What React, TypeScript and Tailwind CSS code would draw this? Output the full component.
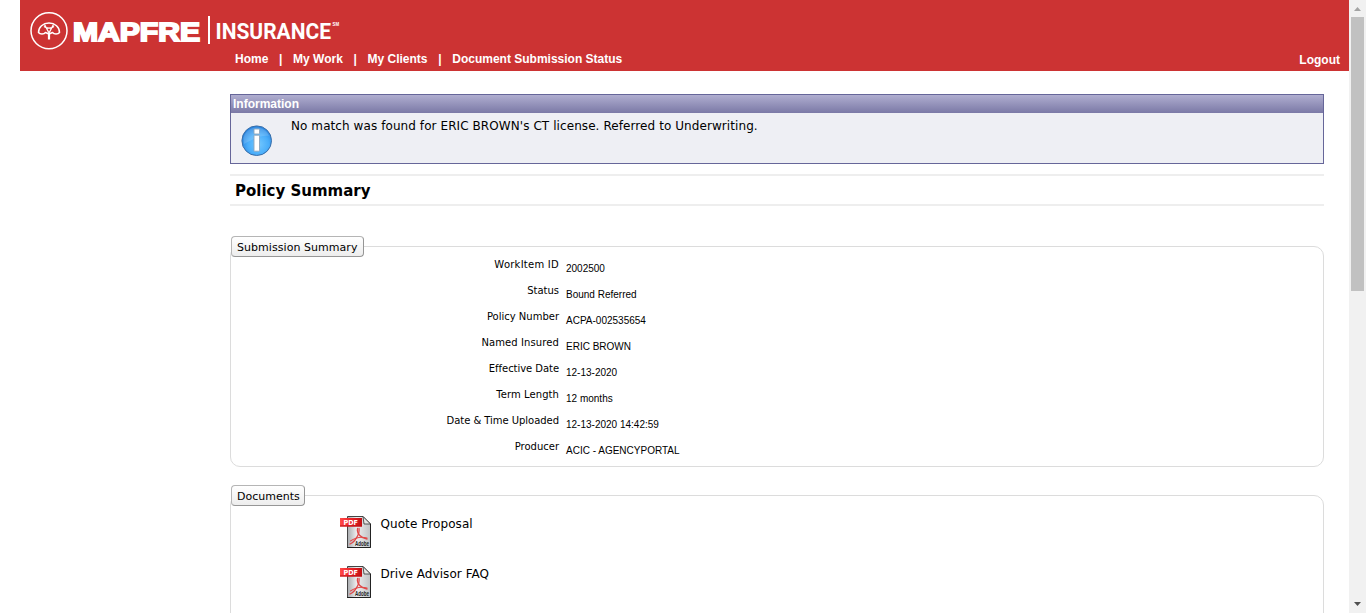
import React from "react";

const navItems = ["Home", "My Work", "My Clients", "Document Submission Status"];

const summary: { label: string; value: string; tracking: string }[] = [
  { label: "WorkItem ID", value: "2002500", tracking: "tracking-[0.25px]" },
  { label: "Status", value: "Bound Referred", tracking: "" },
  { label: "Policy Number", value: "ACPA-002535654", tracking: "" },
  { label: "Named Insured", value: "ERIC BROWN", tracking: "tracking-[0.1px]" },
  { label: "Effective Date", value: "12-13-2020", tracking: "tracking-[-0.05px]" },
  { label: "Term Length", value: "12 months", tracking: "tracking-[0.08px]" },
  { label: "Date & Time Uploaded", value: "12-13-2020 14:42:59", tracking: "tracking-[-0.04px]" },
  { label: "Producer", value: "ACIC - AGENCYPORTAL", tracking: "" },
];

const documents = ["Quote Proposal", "Drive Advisor FAQ"];

function Logo() {
  return (
    <svg className="block h-[50px] w-[330px]" viewBox="20 0 330 50" fill="none">
      <circle cx="49" cy="30.700" r="18" stroke="#fff" strokeWidth="1.500" />
      <g stroke="#fff" strokeWidth="1.500" strokeLinejoin="round">
        <path d="M38.500 32.500C38.500 27 43 23 49 23s10.500 4 10.500 9.500c-1.500 2-5.500 2-7 0L49 34l-3.500-1.500c-1.500 2-5.500 2-7 0Z" />
        <path d="M44.500 24.500L49 33l4.500-8.500M44 26.500c2.500 2.200 7.500 2.200 10 0" strokeWidth="1.300" />
      </g>
      <path d="M49 33v6.500" stroke="#fff" strokeWidth="2.200" />
      <text x="73" y="40.500" fill="#fff" stroke="#fff" strokeWidth="1.900" fontFamily="Liberation Sans, sans-serif" fontWeight="700" fontSize="26" textLength="127" lengthAdjust="spacingAndGlyphs">MAPFRE</text>
      <path d="M209 16v28" stroke="#fff" strokeWidth="2" />
      <text x="215.500" y="38.500" fill="#fff" fontFamily="Roboto, sans-serif" fontWeight="700" fontSize="22" textLength="115.500" lengthAdjust="spacingAndGlyphs">
        INSURANCE
      </text>
      <text x="332.500" y="25.500" fill="#fff" fontFamily="Liberation Sans, sans-serif" fontWeight="700" fontSize="4.500" textLength="6.500" lengthAdjust="spacingAndGlyphs">SM</text>
    </svg>
  );
}

function InfoIcon() {
  return (
    <svg className="mt-[12px] ml-[10px] block size-8 shrink-0" viewBox="0 0 32 32">
      <defs>
        <radialGradient id="infoFill" cx=".55" cy=".62" r=".58">
          <stop offset="0" stopColor="#74c8ff" />
          <stop offset=".6" stopColor="#4aaefa" />
          <stop offset="1" stopColor="#2a86e0" />
        </radialGradient>
      </defs>
      <circle cx="15.700" cy="15.700" r="14.800" fill="url(#infoFill)" stroke="#3a6ea8" strokeWidth="1" />
      <path d="M2.500 13C4.500 6 10 2.500 15.700 2.500S26 6 28 11c-8-1-16 3-25 8Z" fill="#fff" opacity=".15" />
      <g fill="#fff" stroke="#8fa5ba" strokeWidth=".9">
        <rect x="13" y="4" width="5.500" height="5" rx=".8" />
        <rect x="13" y="10.200" width="5.500" height="16" rx=".6" />
      </g>
    </svg>
  );
}

function PdfIcon() {
  return (
    <svg className="block h-[34px] w-8 shrink-0" viewBox="0 0 32 34">
      <defs>
        <linearGradient id="paper" x1="0" y1="0" x2="1" y2="0">
          <stop offset="0" stopColor="#a9acaf" />
          <stop offset=".4" stopColor="#eeeeef" />
          <stop offset="1" stopColor="#bfc1c4" />
        </linearGradient>
        <linearGradient id="pdfTag" x1="0" y1="0" x2="1" y2="0">
          <stop offset="0" stopColor="#ff4a48" />
          <stop offset=".5" stopColor="#ee2226" />
          <stop offset="1" stopColor="#c00f14" />
        </linearGradient>
      </defs>
      <path d="M7.500 1.500h15.500l7.500 7.500v23.500h-23Z" fill="url(#paper)" stroke="#444" />
      <path d="M23 1.500l7.500 7.500H24Z" fill="#e4e4e4" stroke="#333" strokeWidth=".8" />
      <path d="M7 32.500h23.500V9" fill="none" stroke="#222" />
      <g fill="none" stroke="#e04848" strokeWidth="1.300" strokeLinecap="round">
        <path d="M17.500 13.500c-.8 5 3 9.500 9.500 10.500" />
        <path d="M19 13.500c1 5-4 13.500-9 15.500" />
        <path d="M10.500 26c5-3.500 11-4.500 16.500-3" strokeWidth="1.100" />
      </g>
      <rect x="0" y="3" width="22" height="8.500" fill="url(#pdfTag)" />
      <path d="M0 11h22" stroke="#b80f14" />
      <text x="3.500" y="10" fill="#fff" fontFamily="DejaVu Sans, sans-serif" fontWeight="700" fontSize="7" textLength="14.500" lengthAdjust="spacingAndGlyphs">PDF</text>
      <text x="15" y="30.500" fill="#222" fontFamily="Liberation Sans, sans-serif" fontWeight="700" fontSize="7.500" textLength="14" lengthAdjust="spacingAndGlyphs">Adobe</text>
    </svg>
  );
}

function Section({ title, titleClass, className, children }: { title: string; titleClass: string; className: string; children: React.ReactNode }) {
  return (
    <section className={"relative rounded-[10px] border border-[#dcdcdc] " + className}>
      <h2 className={"absolute -top-[11px] left-0 h-[21px] rounded-[4px] border border-[#b5b5b5] border-r-[#969696] border-b-[#969696] bg-linear-to-b from-white to-[#ededed] pl-[5px] text-[11px] leading-[21px] whitespace-nowrap " + titleClass}>
        {title}
      </h2>
      {children}
    </section>
  );
}

function Scrollbar() {
  return (
    <div className="flex h-full w-[17px] shrink-0 flex-col items-center bg-[#f1f1f1]">
      <svg className="h-[17px] w-[17px] shrink-0" viewBox="0 0 17 17"><path d="M5 11l3.500-4 3.500 4Z" fill="#a3a3a3" /></svg>
      <div className="h-[274px] w-[13px] bg-[#c1c1c1]" />
      <svg className="mt-auto h-[17px] w-[17px] shrink-0" viewBox="0 0 17 17"><path d="M5 6h7l-3.500 4Z" fill="#505050" /></svg>
    </div>
  );
}

export default function App() {
  return (
    <div className="flex h-[613px] w-[1366px] overflow-hidden bg-white font-['DejaVu_Sans',sans-serif] text-black">
      <div className="min-w-0 flex-1 overflow-hidden">
        <header className="ml-5 h-[71px] bg-[#cc3333] font-['Liberation_Sans',sans-serif] text-[12px] font-bold text-white">
          <Logo />
          <div className="flex justify-between pr-[9px] pl-[215px] leading-[18px]">
            <nav className="flex">
              {navItems.map((item, i) => (
                <React.Fragment key={item}>
                  {i > 0 && <span className="w-[24.700px] text-center">|</span>}
                  <a>{item}</a>
                </React.Fragment>
              ))}
            </nav>
            <a className="pt-px">Logout</a>
          </div>
        </header>

        <main className="mt-[23px] ml-[230px] w-[1094px]">
          <section className="h-[70px] border border-[#666699] bg-[#eeeff4]">
            <h2 className="h-[18px] bg-linear-to-b from-[#b0aed0] to-[#7b79a6] pl-[2px] font-['Liberation_Sans',sans-serif] text-[12px] leading-[18px] font-bold text-white">Information</h2>
            <div className="flex">
              <InfoIcon />
              <p className="pt-[5px] pl-[18px] text-[12px] leading-[16px] tracking-[0.08px]">No match was found for ERIC BROWN's CT license. Referred to Underwriting.</p>
            </div>
          </section>

          <h1 className="mt-[10px] h-[32px] border-y-2 border-[#eeeeee] pl-[5px] text-[15px] leading-[31px] font-bold">Policy Summary</h1>

          <Section title="Submission Summary" titleClass="w-[133px] tracking-[0.05px]" className="mt-[40px] h-[221px] pt-[9px]">
            <dl>
              {summary.map(({ label, value, tracking }) => (
                <div key={label} className="flex h-[26px]">
                  <dt className={"w-[328px] text-right text-[10px] leading-[18px] " + tracking}>{label}</dt>
                  <dd className="pt-[4px] pl-[7px] font-['Liberation_Sans',sans-serif] text-[10px] leading-[18px]">{value}</dd>
                </div>
              ))}
            </dl>
          </Section>

          <Section title="Documents" titleClass="w-[74px]" className="mt-[28px] h-[221px] pt-[19px] pl-[109px]">
            {documents.map((name) => (
              <div key={name} className="flex h-[50px]">
                <PdfIcon />
                <a className="pl-[8.500px] text-[12px] leading-[18px] tracking-[0.07px]">{name}</a>
              </div>
            ))}
          </Section>
        </main>
      </div>
      <Scrollbar />
    </div>
  );
}
